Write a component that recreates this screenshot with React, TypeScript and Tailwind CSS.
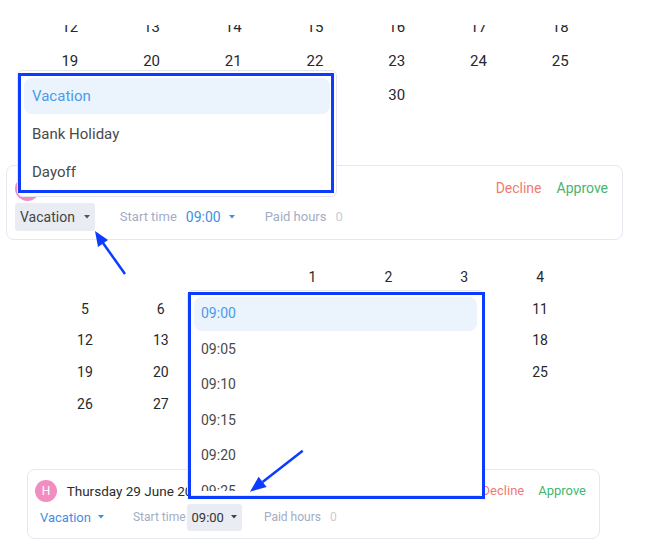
import React from 'react';

type Week = (number | null)[];

const range = (from: number, to: number) =>
  Array.from({ length: to - from + 1 }, (_, i) => from + i);

const juneTop: Week[] = [range(12, 18), range(19, 25), [...range(26, 30), null, null]];
const juneBottom: Week[] = [
  [null, null, null, 1, 2, 3, 4],
  range(5, 11),
  range(12, 18),
  range(19, 25),
  [...range(26, 30), null, null],
];

const leaveTypes = ['Vacation', 'Bank Holiday', 'Dayoff'];
const startTimes = ['09:00', '09:05', '09:10', '09:15', '09:20', '09:25', '09:30'];

function Caret({ className }: { className: string }) {
  return (
    <svg viewBox="0 0 6 4" className={`w-[6px] h-[4px] shrink-0 ${className}`}>
      <polygon points="0,0 6,0 3,3.6" />
    </svg>
  );
}

function Avatar({ size }: { size: 'lg' | 'sm' }) {
  return (
    <div
      className={`rounded-full bg-[#f28dc2] text-white flex items-center justify-center shrink-0 ${
        size === 'lg' ? 'w-[25px] h-[25px] text-[13px]' : 'w-[22px] h-[22px] text-[12px]'
      }`}
    >
      H
    </div>
  );
}

export default function App() {
  return (
    <div className="relative w-[670px] h-[554px] overflow-hidden bg-white font-['Roboto',sans-serif]">
      {/* upper calendar, cut off at the top */}
      <div className="mt-[25px] overflow-hidden">
        <div className="-mt-[14.7px] ml-[29px] w-[572px]">
          {juneTop.map((w, i) => (
            <div key={i} className="grid grid-cols-7 h-[34px]">
              {w.map((d, j) => (
                <div key={j} className="flex items-center justify-center text-[15px] text-[#27272d]">
                  {d}
                </div>
              ))}
            </div>
          ))}
        </div>
      </div>

      {/* request card, type select open */}
      <div className="mt-[52.7px] ml-[6px] w-[617px] border border-[#e5e8ef] rounded-lg pt-[10px] pb-[8px] px-[8px]">
        <div className="flex items-center h-[25px]">
          <Avatar size="lg" />
          <span className="ml-[10px] text-[14.5px] text-[#2b2b2b]">Thursday 29 June 2023</span>
          <div className="ml-auto flex items-center text-[14px]">
            <button className="px-[7px] text-[#f07b74]">Decline</button>
            <button className="ml-[2px] px-[6px] text-[#46b56e]">Approve</button>
          </div>
        </div>
        <div className="mt-[2px] flex items-center h-[28px]">
          <button className="h-[28px] px-[5px] flex items-center bg-[#e9ecf3] rounded-[3px] text-[14px] text-[#444]">
            Vacation
            <span className="ml-[9px]">
              <Caret className="fill-[#555]" />
            </span>
          </button>
          <span className="ml-[25px] text-[13px] text-[#a3adc3]">Start time</span>
          <button className="ml-[4px] px-[5px] flex items-center text-[14px] text-[#3f8fe2]">
            09:00
            <span className="ml-[8px]">
              <Caret className="fill-[#3f8fe2]" />
            </span>
          </button>
          <span className="ml-[25px] text-[13px] text-[#a3adc3]">Paid hours</span>
          <span className="ml-[9px] text-[13px] text-[#c9cdd5]">0</span>
        </div>
      </div>

      {/* lower calendar */}
      <div className="mt-[21.5px] ml-[47px] w-[531px]">
        {juneBottom.map((w, i) => (
          <div key={i} className="grid grid-cols-7 h-[31.7px]">
            {w.map((d, j) => (
              <div key={j} className="flex items-center justify-center text-[14px] text-[#27272d]">
                {d}
              </div>
            ))}
          </div>
        ))}
      </div>

      {/* request card, start time select open */}
      <div className="mt-[49px] ml-[27px] w-[573px] border border-[#e5e8ef] rounded-lg pt-[10px] pb-[7px] px-[7px]">
        <div className="flex items-center h-[22px]">
          <Avatar size="sm" />
          <span className="ml-[9.7px] text-[13.5px] text-[#2b2b2b]">Thursday 29 June 2023</span>
          <div className="ml-auto flex items-center text-[13px]">
            <button className="px-[6px] text-[#f07b74]">Decline</button>
            <button className="ml-[2px] px-[6px] text-[#46b56e]">Approve</button>
          </div>
        </div>
        <div className="mt-[2px] flex items-center h-[27px]">
          <button className="h-[27px] px-[5px] flex items-center text-[13px] text-[#3f8fe2]">
            Vacation
            <span className="ml-[7px]">
              <Caret className="fill-[#3f8fe2]" />
            </span>
          </button>
          <span className="ml-[24px] text-[12px] text-[#a3adc3]">Start time</span>
          <button className="ml-[1px] h-[27px] px-[5px] flex items-center bg-[#e9ecf3] rounded-[3px] text-[13px] text-[#333]">
            09:00
            <span className="ml-[7px]">
              <Caret className="fill-[#444]" />
            </span>
          </button>
          <span className="ml-[22px] text-[12px] text-[#a3adc3]">Paid hours</span>
          <span className="ml-[9px] text-[12px] text-[#c9cdd5]">0</span>
        </div>
      </div>

      {/* leave type menu */}
      <div className="absolute left-[17px] top-[70px] w-[320px] bg-white border border-[#e3e6ec] rounded-md pt-[7px] pb-[6px] px-[6px] flex flex-col gap-[2px]">
        {leaveTypes.map((t, i) => (
          <div
            key={t}
            className={`h-[36px] flex items-center pl-[8px] rounded-lg text-[15px] ${
              i === 0 ? 'bg-[#ebf3fd] text-[#4b9be9]' : 'text-[#4a4a4a]'
            }`}
          >
            {t}
          </div>
        ))}
      </div>

      {/* start time menu */}
      <div className="absolute left-[187px] top-[290px] w-[297px] h-[206px] bg-white border border-[#e3e6ec] rounded-md pt-[6px] pb-[4px] px-[6px] flex flex-col">
        <div className="flex-1 overflow-hidden flex flex-col gap-[2px]">
          {startTimes.map((t, i) => (
            <div
              key={t}
              className={`h-[33.5px] shrink-0 flex items-center pl-[7px] rounded-lg text-[14px] ${
                i === 0 ? 'bg-[#ebf3fd] text-[#4b9be9]' : 'text-[#4a4a4a]'
              }`}
            >
              {t}
            </div>
          ))}
        </div>
      </div>

      {/* highlight frames */}
      <div className="absolute left-[18px] top-[73px] w-[316px] h-[120px] border-[3px] border-[#0b3cff]" />
      <div className="absolute left-[188px] top-[292px] w-[297px] h-[207px] border-[3px] border-[#0b3cff]" />

      {/* pointer arrows */}
      <svg className="absolute inset-0 w-[670px] h-[554px] pointer-events-none" viewBox="0 0 670 554">
        <line x1="125" y1="274" x2="103" y2="243" stroke="#0b3cff" strokeWidth="2.5" />
        <polygon points="95,231 108,240 98,247" fill="#0b3cff" />
        <line x1="302.7" y1="450.7" x2="262.6" y2="481.9" stroke="#0b3cff" strokeWidth="2.5" />
        <polygon points="250,491.7 258.6,476.8 266.6,487" fill="#0b3cff" />
      </svg>
    </div>
  );
}
